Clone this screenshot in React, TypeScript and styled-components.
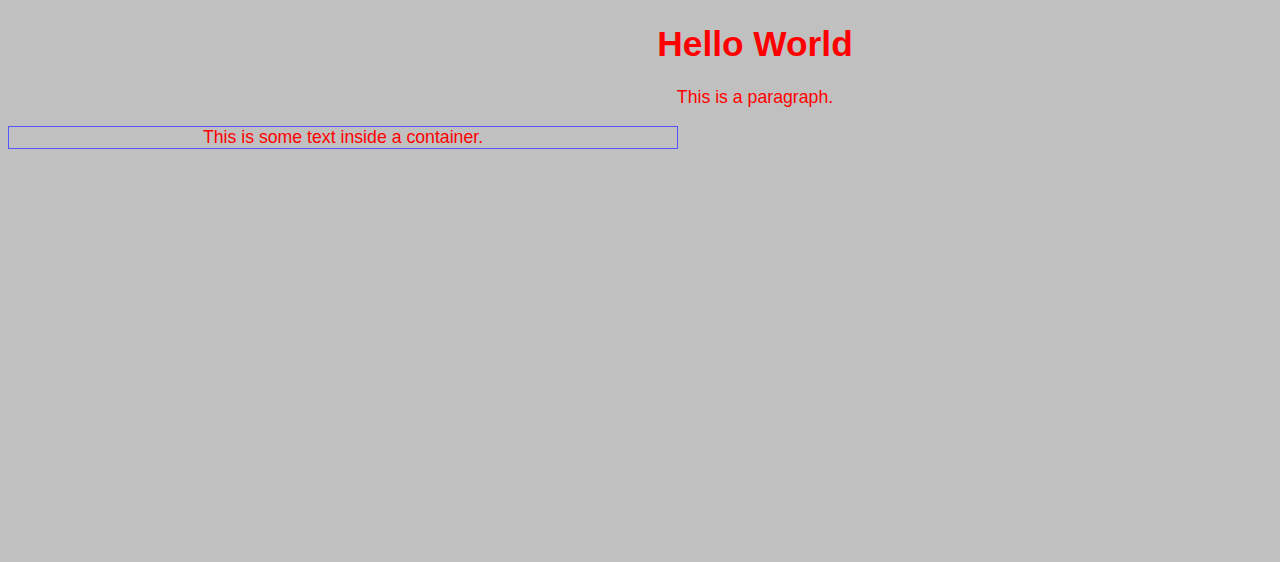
import React from "react";
import styled, { createGlobalStyle } from "styled-components";

const GlobalStyle = createGlobalStyle`
  html, body {
    background: #c0c0c0;
  }
  body {
    margin: 0 8px 8px;
    font-family: "Liberation Sans", Arial, sans-serif;
    color: #ff0000;
  }
`;

const Header = styled.header`
  margin-left: 230px;
  text-align: center;
`;

const Title = styled.h1`
  font-size: 35.3px;
  font-weight: bold;
  color: #ff0000;
  margin: 23.5px 0;
`;

const Paragraph = styled.p`
  font-size: 17.7px;
  color: #ff0000;
  margin: 18px 0;
`;

const Container = styled.div`
  width: 668px;
  border: 1px solid #5555ff;
  text-align: center;
  font-size: 17.7px;
  line-height: 21px;
  color: #ff0000;
`;

export default function App() {
  return (
    <>
      <GlobalStyle />
      <Header>
        <Title>Hello World</Title>
        <Paragraph>This is a paragraph.</Paragraph>
      </Header>
      <Container>This is some text inside a container.</Container>
    </>
  );
}
